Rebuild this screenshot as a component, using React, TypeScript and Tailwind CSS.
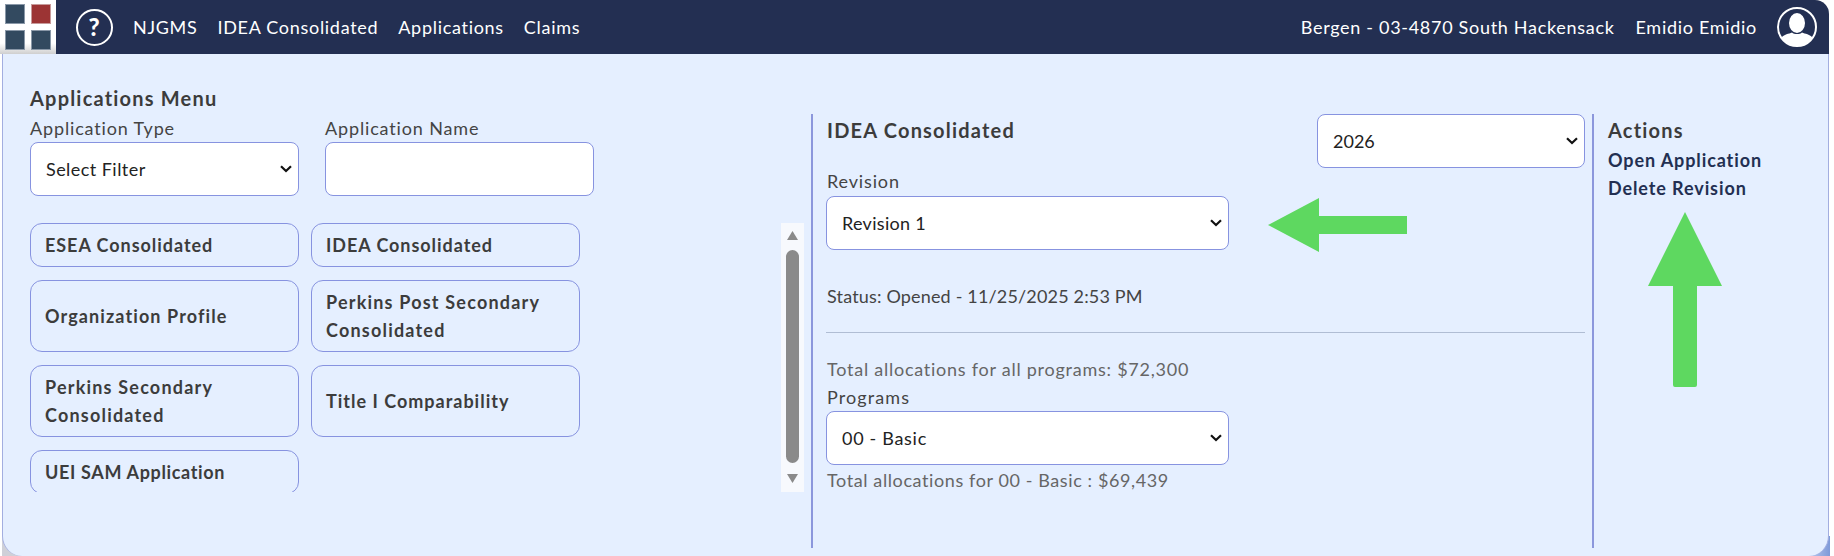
import type { ReactNode } from 'react'

const cards = [
  { name: 'ESEA Consolidated', tracking: 'tracking-[0.95px]' },
  { name: 'IDEA Consolidated', tracking: 'tracking-[0.95px]' },
  { name: 'Organization Profile', tracking: 'tracking-[1.1px]' },
  { name: 'Perkins Post Secondary Consolidated', tracking: 'tracking-[1.2px]' },
  { name: 'Perkins Secondary Consolidated', tracking: 'tracking-[1.2px]' },
  { name: 'Title I Comparability', tracking: 'tracking-[1px]' },
  { name: 'UEI SAM Application', tracking: 'tracking-[0.65px]' },
]

function Field({ label, children }: { label: string; children: ReactNode }) {
  return (
    <div className="flex flex-col">
      <label className="text-[18px] leading-[28px] tracking-[0.85px] text-[#444]">{label}</label>
      {children}
    </div>
  )
}

function Select({ value, className, tracking }: { value: string; className: string; tracking: string }) {
  return (
    <div className={`relative h-[54px] ${className}`}>
      <select
        defaultValue={value}
        className={`h-full w-full appearance-none rounded-lg border border-[#8793e0] bg-white pl-[15px] text-[18px] text-[#222] ${tracking}`}
      >
        <option>{value}</option>
      </select>
      <svg width="12" height="8" viewBox="0 0 12 8" className="pointer-events-none absolute right-[7px] top-[23px]">
        <path d="M1 1.200 6 6l5-4.800" fill="none" stroke="#111" strokeWidth="2.200" />
      </svg>
    </div>
  )
}

function Scrollbar() {
  return (
    <div className="flex w-[23px] shrink-0 flex-col items-center bg-[#f7f9fd] pt-[8px]">
      <svg width="11" height="9" viewBox="0 0 11 9" className="fill-[#8a8a8a]">
        <path d="M5.5 0 11 9H0z" />
      </svg>
      <div className="mt-[10px] h-[213px] w-[13px] rounded-full bg-[#8a8a8a]" />
      <svg width="11" height="9" viewBox="0 0 11 9" className="mt-[11px] fill-[#8a8a8a]">
        <path d="M5.5 9 11 0H0z" />
      </svg>
    </div>
  )
}

export default function App() {
  return (
    <div className="relative h-[556px] w-[1834px] overflow-hidden bg-white pl-[2px] pr-[5px] font-['Lato',sans-serif]">
      {/* top bar */}
      <header className="-ml-[2px] flex h-[54px] items-center rounded-tr-[14px] bg-[#232f52] pr-[12px] text-[18px] tracking-[0.7px] text-white">
        <div className="grid h-[54px] w-[56px] shrink-0 grid-cols-[20px_20px] content-start justify-center gap-[6px] bg-gradient-to-b from-white from-80% to-[#cfcfcf] pt-[4px]">
          <span className="h-[20px] border border-[#8a98a8] bg-[#334a60]" />
          <span className="h-[20px] border border-[#c79a9a] bg-[#9c3434]" />
          <span className="h-[20px] border border-[#8a98a8] bg-[#334a60]" />
          <span className="h-[20px] border border-[#8a98a8] bg-[#334a60]" />
        </div>
        <div className="ml-[20px] flex h-[37px] w-[37px] items-center justify-center rounded-full border-2 border-white text-[24px] font-black">?</div>
        <nav className="ml-[20px] flex gap-[20px]">
          <span>NJGMS</span>
          <span>IDEA Consolidated</span>
          <span>Applications</span>
          <span>Claims</span>
        </nav>
        <span className="ml-auto">Bergen - 03-4870 South Hackensack</span>
        <span className="ml-[21px]">Emidio Emidio</span>
        <svg width="40" height="40" viewBox="0 0 40 40" className="ml-[20px]">
          <circle cx="20" cy="20" r="19" fill="#232f52" stroke="#fff" strokeWidth="2" />
          <ellipse cx="20" cy="16" rx="8" ry="10" fill="#fff" />
          <path d="M4 31c3-4 8-4 11-5.500 2 2 8 2 10 0 3 1.500 8 1.500 11 5.500a20 20 0 0 1-32 0z" fill="#fff" />
        </svg>
      </header>

      {/* corner shading behind the panel */}
      <div className="absolute bottom-0 left-[2px] h-[20px] w-[20px] bg-[#cfd0d8]" />
      <div className="absolute bottom-0 left-[1809px] h-[20px] w-[21px] bg-gradient-to-r from-[#b9c8ee] to-[#7f9ad8]" />

      {/* main panel */}
      <main className="relative flex h-[502px] rounded-b-[20px] border-x border-[#a3aee0] bg-[#e5efff]">
        <section className="w-[808px] shrink-0 pl-[27px] pr-[7px] pt-[30px]">
          <h2 className="text-[20px] font-bold leading-[28px] pb-[2px] tracking-[1.2px] text-[#3c3c3c]">Applications Menu</h2>
          <div className="flex gap-[26px]">
            <Field label="Application Type">
              <Select value="Select Filter" className="w-[269px]" tracking="tracking-[0.45px]" />
            </Field>
            <Field label="Application Name">
              <input className="h-[54px] w-[269px] rounded-lg border border-[#8793e0] bg-white" />
            </Field>
          </div>
          <div className="mt-[27px] flex h-[269px] justify-between">
            <div className="grid h-[269px] grid-cols-[269px_269px] content-start gap-x-[12px] gap-y-[13px] overflow-hidden">
              {cards.map((card) => (
                <div
                  key={card.name}
                  className={`flex items-center rounded-xl border border-[#8793e0] px-[14px] py-[7px] text-[18px] font-bold leading-[28px] text-[#3c3c3c] ${card.tracking}`}
                >
                  {card.name}
                </div>
              ))}
            </div>
            <Scrollbar />
          </div>
        </section>

        <section className="mb-[8px] mt-[60px] flex flex-1 border-l-2 border-[#8c97dc] pl-[13px]">
          <div className="w-[759px]">
            <div className="flex items-start justify-between">
              <div>
                <h2 className="pl-[1px] pt-[2px] text-[20px] font-bold leading-[28px] tracking-[1.2px] text-[#3c3c3c]">IDEA Consolidated</h2>
                <div className="mt-[23px] pl-[1px] text-[18px] leading-[29px] tracking-[0.85px] text-[#444]">Revision</div>
                <Select value="Revision 1" className="w-[403px]" tracking="tracking-[0.3px]" />
              </div>
              <Select value="2026" className="w-[268px]" tracking="tracking-normal" />
            </div>
            <p className="mt-[32px] pl-[1px] text-[18px] leading-[28px] tracking-[0.17px] text-[#444]">Status: Opened - 11/25/2025 2:53 PM</p>
            <hr className="mt-[22px] border-[#b0bdd4]" />
            <p className="mt-[22px] pl-[1px] text-[18px] leading-[28px] tracking-[0.75px] text-[#666]">Total allocations for all programs: $72,300</p>
            <div className="pl-[1px] text-[18px] leading-[28px] tracking-[1.1px] text-[#444]">Programs</div>
            <Select value="00 - Basic" className="w-[403px]" tracking="tracking-[0.7px]" />
            <p className="mt-[1px] pl-[1px] text-[18px] leading-[28px] tracking-[0.6px] text-[#666]">Total allocations for 00 - Basic : $69,439</p>
          </div>
          <div className="ml-[7px] border-l-2 border-[#8c97dc] pl-[14px] pt-[2px]">
            <h2 className="text-[20px] font-bold leading-[28px] tracking-[1.2px] text-[#3c3c3c]">Actions</h2>
            <a className="mt-[2px] block text-[18px] font-bold leading-[28px] tracking-[0.9px] text-[#232f52]">Open Application</a>
            <a className="block text-[18px] font-bold leading-[28px] tracking-[0.9px] text-[#232f52]">Delete Revision</a>
          </div>
        </section>
      </main>

      {/* green annotation arrows */}
      <svg width="140" height="54" viewBox="0 0 140 54" className="absolute left-[1268px] top-[198px] fill-[#5ed860]">
        <path d="M0 27 51 0v18h88v18H51v18z" />
      </svg>
      <svg width="74" height="176" viewBox="0 0 74 176" className="absolute left-[1648px] top-[212px] fill-[#5ed860]">
        <path d="M37 0 74 74H49v99a2 2 0 0 1-2 2H27a2 2 0 0 1-2-2V74H0z" />
      </svg>
    </div>
  )
}
